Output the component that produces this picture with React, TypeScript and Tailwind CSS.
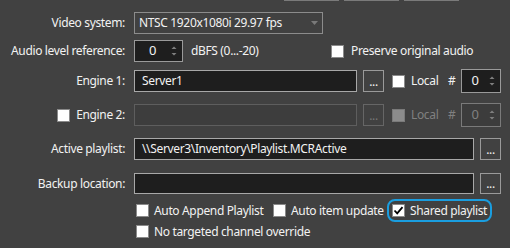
import React from 'react';

// Playlist settings panel (dark theme)

function Box({ checked, disabled }: { checked?: boolean; disabled?: boolean }) {
  return (
    <span
      className={
        'flex h-[13px] w-[13px] shrink-0 items-center justify-center border ' +
        (disabled ? 'border-[#7a7a7a] bg-[#8c8c8c]' : 'border-[#8a8a8a] bg-white')
      }
    >
      {checked && (
        <svg width="11" height="11" viewBox="0 0 11 11">
          <path d="M1.5 5.5 L4.2 8.3 L9.5 2.2" fill="none" stroke="#000" strokeWidth="1.8" />
        </svg>
      )}
    </span>
  );
}

function Spin({ width, disabled }: { width: string; disabled?: boolean }) {
  return (
    <div
      className={
        'flex h-full items-center border ' +
        width +
        (disabled ? ' border-[#7a7a7a] bg-[#3c3c3c] text-[#808080]' : ' border-[#9a9a9a] bg-[#1e1e1e]')
      }
    >
      <span className="flex-1 text-center text-[13px]">0</span>
      <svg width="8" height="14" viewBox="0 0 8 14" className="mr-[4px]">
        <path d="M1.5 5 L4 2.5 L6.5 5 Z" fill="#7f7f7f" />
        <path d="M1.5 9 L4 11.5 L6.5 9 Z" fill="#7f7f7f" />
      </svg>
    </div>
  );
}

function Dots({ disabled }: { disabled?: boolean }) {
  return (
    <div
      className={
        'flex h-full w-[21px] items-end justify-center pb-[3px] border ' +
        (disabled ? 'border-[#666666] text-[#777777]' : 'border-[#9a9a9a]')
      }
    >
      <span className="leading-none">...</span>
    </div>
  );
}

function Label({ children }: { children: React.ReactNode }) {
  return <div className="flex w-[125px] shrink-0 items-center justify-end">{children}</div>;
}

export default function App() {
  return (
    <div className="h-[248px] w-[510px] overflow-hidden whitespace-nowrap bg-[#414141] font-['Noto_Sans',sans-serif] text-[12px] tracking-[-0.35px] text-[#f2f2f2]">
      {/* bottom edges of the buttons above */}
      <div className="flex h-px gap-[5px] pl-[284px]">
        <span className="w-[55px] bg-[#7a7a7a]" />
        <span className="w-[55px] bg-[#7a7a7a]" />
        <span className="w-[55px] bg-[#7a7a7a]" />
      </div>

      <div className="mt-[11px] flex h-[22px] gap-[9px]">
        <Label>Video system:</Label>
        <div className="flex w-[189px] items-center justify-between border border-[#8c8c8c] pl-[4px] pr-[4px]">
          <span>NTSC 1920x1080i 29.97 fps</span>
          <svg width="7" height="4" viewBox="0 0 7 4">
            <path d="M0 0 L7 0 L3.5 4 Z" fill="#7a7a7a" />
          </svg>
        </div>
      </div>

      <div className="mt-[6px] flex h-[22px] items-center gap-[9px]">
        <Label>Audio level reference:</Label>
        <Spin width="w-[49px]" />
        <span className="ml-[-1px] w-[131px]">dBFS (0...-20)</span>
        <Box />
        <span className="ml-[-2px]">Preserve original audio</span>
      </div>

      <div className="mt-[8px] flex h-[22px] items-center">
        <Label>Engine 1:</Label>
        <div className="ml-[9px] flex h-full w-[223px] items-center border border-[#a8a8a8] bg-[#1e1e1e] pl-[7px]">
          Server1
        </div>
        <div className="ml-[6px] h-full">
          <Dots />
        </div>
        <div className="ml-[8px]">
          <Box />
        </div>
        <span className="ml-[6px] w-[37px]">Local</span>
        <span className="w-[13px]">#</span>
        <div className="h-[24px]">
          <Spin width="w-[40px]" />
        </div>
      </div>

      <div className="mt-[12px] flex h-[22px] items-center">
        <Label>
          <Box />
          <span className="ml-[6px]">Engine 2:</span>
        </Label>
        <div className="ml-[9px] h-full w-[223px] border border-[#5e5e5e] bg-[#3d3d3d]" />
        <div className="ml-[6px] h-full">
          <Dots disabled />
        </div>
        <div className="ml-[8px]">
          <Box disabled />
        </div>
        <span className="ml-[6px] w-[37px] text-[#808080]">Local</span>
        <span className="w-[13px] text-[#808080]">#</span>
        <div className="h-[24px]">
          <Spin width="w-[40px]" disabled />
        </div>
      </div>

      <div className="mt-[12px] flex h-[22px] items-center">
        <Label>Active playlist:</Label>
        <div className="ml-[9px] flex h-full w-[340px] items-center border border-[#a8a8a8] bg-[#1e1e1e] pl-[7px]">
          \\Server3\Inventory\Playlist.MCRActive
        </div>
        <div className="ml-[6px] h-full">
          <Dots />
        </div>
      </div>

      <div className="mt-[13px] flex h-[21px] items-center">
        <Label>Backup location:</Label>
        <div className="ml-[9px] h-full w-[340px] border border-[#a8a8a8] bg-[#1e1e1e]" />
        <div className="ml-[6px] h-full">
          <Dots />
        </div>
      </div>

      <div className="mt-[5px] flex h-[23px] items-center pl-[136px]">
        <div className="flex w-[137px] items-center">
          <Box />
          <span className="ml-[5px]">Auto Append Playlist</span>
        </div>
        <div className="flex w-[114px] items-center">
          <Box />
          <span className="ml-[5px]">Auto item update</span>
        </div>
        <div className="flex h-full w-[105px] items-center rounded-[8px] border-2 border-[#1a9ee0] pl-[3px]">
          <Box checked />
          <span className="ml-[5px]">Shared playlist</span>
        </div>
      </div>

      <div className="mt-[3px] flex h-[13px] items-center pl-[136px]">
        <Box />
        <span className="ml-[5px]">No targeted channel override</span>
      </div>
    </div>
  );
}
